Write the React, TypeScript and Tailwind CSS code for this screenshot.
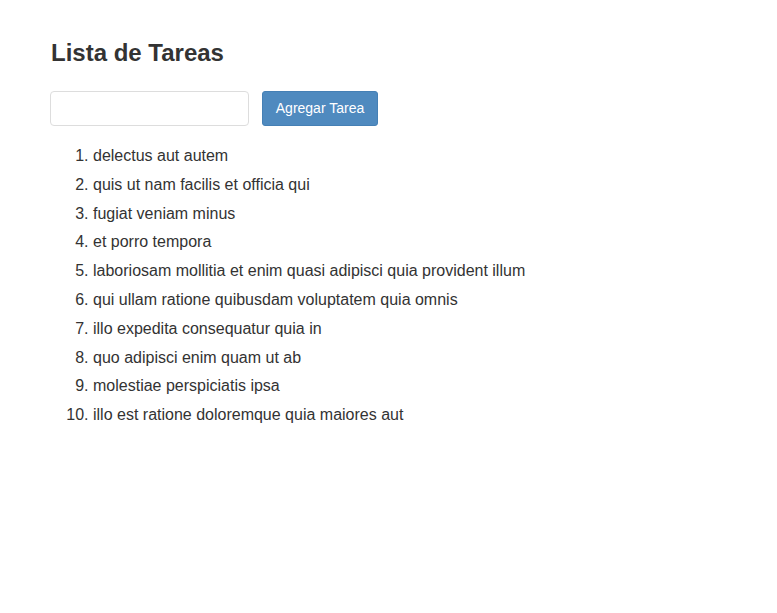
import React, { useState } from 'react';

const initialTasks = [
    'delectus aut autem',
    'quis ut nam facilis et officia qui',
    'fugiat veniam minus',
    'et porro tempora',
    'laboriosam mollitia et enim quasi adipisci quia provident illum',
    'qui ullam ratione quibusdam voluptatem quia omnis',
    'illo expedita consequatur quia in',
    'quo adipisci enim quam ut ab',
    'molestiae perspiciatis ipsa',
    'illo est ratione doloremque quia maiores aut',
];

export default function App() {
    const [tasks, setTasks] = useState(initialTasks);
    const [text, setText] = useState('');

    const addTask = () => {
        if (!text.trim()) return;
        setTasks([...tasks, text.trim()]);
        setText('');
    };

    return (
        <main className="min-h-screen bg-white text-[#333] font-['Liberation_Sans',Arial,sans-serif] px-[50px] pt-[40px]">
            <h1 className="text-[24px] font-bold leading-[26px] ml-px">Lista de Tareas</h1>

            <div className="flex items-center gap-[13px] mt-[25px]">
                <input
                    value={text}
                    onChange={(e) => setText(e.target.value)}
                    className="w-[199px] h-[35px] border border-[#ddd] rounded-[4px] px-3 text-sm outline-none"
                />
                <button
                    onClick={addTask}
                    className="w-[116px] h-[35px] rounded-[3px] bg-[#4f8abf] border border-[#4580b5] text-white text-[14px]"
                >
                    Agregar Tarea
                </button>
            </div>

            <ol className="list-decimal pl-[43px] mt-[16px] text-[16px]">
                {tasks.map((task, index) => (
                    <li key={index} className="leading-[28.8px]">{task}</li>
                ))}
            </ol>
        </main>
    );
}
